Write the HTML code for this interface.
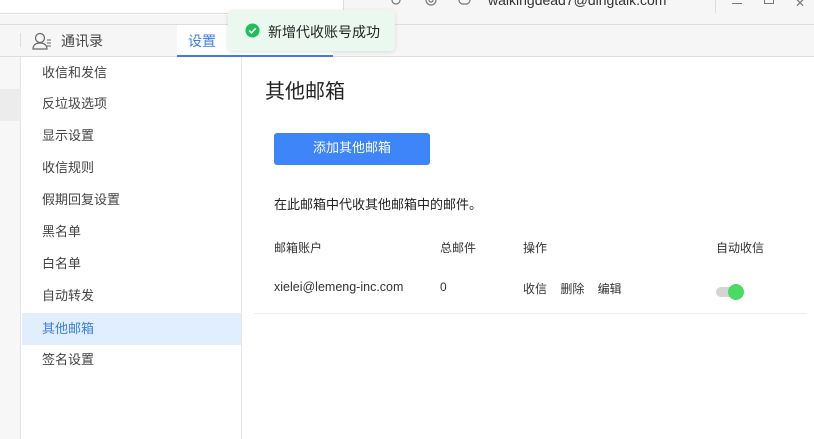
<!DOCTYPE html>
<html><head><meta charset="utf-8"><style>
*{margin:0;padding:0;box-sizing:border-box}
body{width:814px;height:439px;overflow:hidden;background:#fff;font-family:"Liberation Sans","Noto Sans CJK SC",sans-serif;position:relative;color:#333}
.a{position:absolute}
.menu div{position:absolute;left:22px;width:219px;height:32px;line-height:32px;padding-left:20px;font-size:13px;color:#444}
</style></head><body>
<div class="a" style="left:0;top:0;width:343px;height:14px;background:#fff;border-bottom:1px solid #ddd"></div>
<div class="a" style="left:343px;top:0;width:471px;height:24px;background:#f6f6f6"></div>
<div class="a" style="left:0;top:15px;width:343px;height:9px;background:#f6f6f6"></div>
<div class="a" style="left:343px;top:0;width:1px;height:14px;background:#ddd"></div>
<div class="a" style="left:715px;top:0;width:1px;height:13px;background:#ddd"></div>
<svg class="a" style="left:390px;top:-6px" width="12" height="12" viewBox="0 0 12 12"><path d="M2 6a4 4 0 1 0 1.5-3.1" fill="none" stroke="#777" stroke-width="1.2"/></svg>
<svg class="a" style="left:424px;top:-7px" width="14" height="14" viewBox="0 0 14 14"><circle cx="7" cy="7" r="5" fill="none" stroke="#777" stroke-width="1.2"/><circle cx="7" cy="7" r="2" fill="none" stroke="#777" stroke-width="1.2"/></svg>
<svg class="a" style="left:458px;top:-6px" width="13" height="12" viewBox="0 0 13 12"><rect x="1" y="1" width="11" height="9" rx="4" fill="none" stroke="#777" stroke-width="1.2"/><path d="M4 5h5" stroke="#777"/></svg>
<div class="a" style="left:732px;top:3px;width:10px;height:1px;background:#777"></div>
<div class="a" style="left:764px;top:-4px;width:10px;height:8px;border:1px solid #777"></div>
<div class="a" style="left:795px;top:-4px;font-size:12px;color:#777">✕</div>
<div class="a" style="left:0;top:24px;width:814px;height:33px;background:#f6f6f6;border-top:1px solid #ddd;border-bottom:1px solid #ddd"></div>
<div class="a" style="left:20px;top:33px;width:1px;height:14px;background:#ddd"></div>
<svg class="a" style="left:31px;top:31px" width="22" height="20" viewBox="0 0 22 20"><circle cx="9" cy="7" r="4.5" fill="none" stroke="#666" stroke-width="1.2"/><path d="M2 18c0-4 3-6 7-6s7 2 7 6z" fill="none" stroke="#666" stroke-width="1.2"/><path d="M16 9h4M16 12h4M16 15h4" stroke="#666" stroke-width="1.1"/></svg>
<div class="a" style="left:61px;top:31px;font-size:14px;color:#444">通讯录</div>
<div class="a" style="left:177px;top:25px;width:156px;height:32px;background:#fff;border-bottom:2px solid #3c7de8"></div>
<div class="a" style="left:188px;top:31px;font-size:14px;color:#3c7de8">设置</div>
<div class="a" style="left:488px;top:-8px;font-size:14px;color:#333">walkingdead7@dingtalk.com</div>
<div class="a" style="left:0;top:57px;width:21px;height:382px;background:#f7f7f7;border-right:1px solid #e4e4e4"></div>
<div class="a" style="left:0;top:89px;width:21px;height:32px;background:#ececec"></div>
<div class="a" style="left:241px;top:57px;width:1px;height:382px;background:#e6e6e6"></div>
<div class="menu">
<div style="top:57px">收信和发信</div><div style="top:88px">反垃圾选项</div><div style="top:120px">显示设置</div><div style="top:152px">收信规则</div><div style="top:184px">假期回复设置</div><div style="top:216px">黑名单</div><div style="top:248px">白名单</div><div style="top:280px">自动转发</div><div style="top:313px;background:#e0eefe;color:#3c7de8">其他邮箱</div><div style="top:344px">签名设置</div>
</div>
<div class="a" style="left:265px;top:75px;font-size:20px;color:#222">其他邮箱</div>
<div class="a" style="left:274px;top:133px;width:156px;height:32px;background:#3d85f8;border-radius:3px;color:#fff;font-size:13px;text-align:center;line-height:30px">添加其他邮箱</div>
<div class="a" style="left:274px;top:194px;font-size:13px;color:#222">在此邮箱中代收其他邮箱中的邮件。</div>
<div class="a" style="left:274px;top:239px;font-size:12px;color:#333">邮箱账户</div>
<div class="a" style="left:440px;top:239px;font-size:12px;color:#333">总邮件</div>
<div class="a" style="left:523px;top:239px;font-size:12px;color:#333">操作</div>
<div class="a" style="left:716px;top:239px;font-size:12px;color:#333">自动收信</div>
<div class="a" style="left:274px;top:280px;font-size:12.5px;color:#333">xielei@lemeng-inc.com</div>
<div class="a" style="left:440px;top:280px;font-size:12px;color:#333">0</div>
<div class="a" style="left:523px;top:280px;font-size:12px;color:#333">收信&nbsp;&nbsp;&nbsp;&nbsp;删除&nbsp;&nbsp;&nbsp;&nbsp;编辑</div>
<div class="a" style="left:716px;top:287px;width:22px;height:10px;border-radius:5px;background:#d4d4d4"></div>
<div class="a" style="left:728px;top:284px;width:16px;height:16px;border-radius:8px;background:#4cd964"></div>
<div class="a" style="left:254px;top:313px;width:553px;height:1px;background:#eee"></div>
<div class="a" style="left:228px;top:10px;width:167px;height:41px;background:#eaf8f0;border-radius:4px;box-shadow:0 1px 4px rgba(0,0,0,.12)"></div>
<svg class="a" style="left:245px;top:23px" width="15" height="15" viewBox="0 0 15 15"><circle cx="7.5" cy="7.5" r="7" fill="#1fbf5b"/><path d="M4.2 7.6l2.2 2.2 4.2-4.4" fill="none" stroke="#fff" stroke-width="1.6"/></svg>
<div class="a" style="left:268px;top:22px;font-size:14px;color:#222">新增代收账号成功</div>
</body></html>
